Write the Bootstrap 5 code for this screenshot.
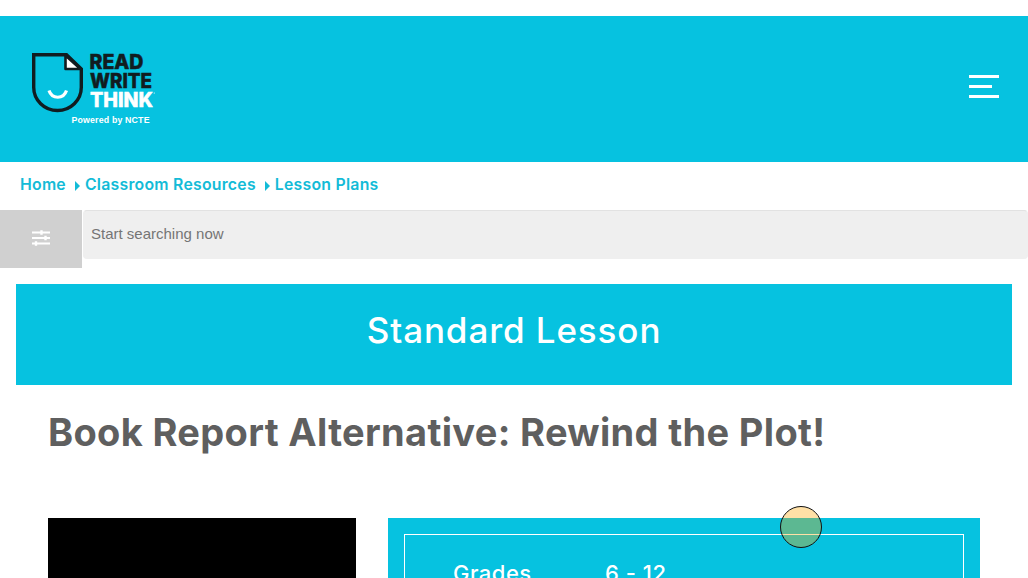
<!DOCTYPE html>
<html lang="en">
<head>
  <meta charset="UTF-8">
  <meta name="viewport" content="width=device-width, initial-scale=1">
  <title>Book Report Alternative: Rewind the Plot! | Read Write Think</title>
  <!-- Bootstrap CSS -->
  <link href="https://cdn.jsdelivr.net/npm/bootstrap@5.3.3/dist/css/bootstrap.min.css" rel="stylesheet">
  <style>
    :root {
      --rwt-blue: #06c2e0;
      --rwt-gray: #5f5f5f;
    }
    body {
      font-family: Inter, "Open Sans", sans-serif;
      height: 100vh;
      overflow: hidden;
    }
    .bg-rwt {
      background-color: var(--rwt-blue);
    }

    /* Header */
    .site-header {
      height: 146px;
      padding: 0 29px 5px 32px;
    }
    .site-logo {
      margin-top: 6px;
    }
    .menu-toggle {
      gap: 7px;
    }
    .menu-toggle span {
      display: block;
      width: 30px;
      height: 3px;
      background: #fff;
    }
    .menu-toggle span:nth-child(2) {
      width: 23px;
    }

    /* Breadcrumbs */
    .crumbs {
      height: 48px;
      padding: 0 20px 2px;
      font-size: 15.8px;
      font-weight: 600;
      letter-spacing: .25px;
    }
    .crumbs a {
      color: #13bbd7;
      white-space: nowrap;
    }
    .crumb-arrow {
      margin: 1px 5px 0 9px;
      border-left: 5px solid #13bbd7;
      border-top: 5px solid transparent;
      border-bottom: 5px solid transparent;
    }

    /* Search */
    .filter-btn {
      width: 82px;
      height: 58px;
      padding: 0 0 3px;
      background: #d0d0d0;
    }
    .search-input {
      height: 49px;
      margin-left: 1px;
      padding: 0 7px 3px;
      border: 1px solid #efefef;
      border-top-color: #e2e2e2;
      border-radius: 4px;
      background: #efefef;
      font: 15px "Liberation Sans", Arial, sans-serif;
    }
    .search-input::placeholder {
      color: #757575;
    }

    .type-banner {
      height: 101px;
      padding-bottom: 10px;
    }
    .type-banner h2 {
      font-size: 35px;
      font-weight: 500;
      letter-spacing: .9px;
    }
    .lesson-title {
      margin: 23px 0 0;
      height: 94px;
      line-height: 48px;
      font-size: 38px;
      font-weight: 700;
      letter-spacing: .33px;
      color: var(--rwt-gray);
      white-space: nowrap;
    }

    /* Preview image and details */
    .lesson-row {
      gap: 32px;
    }
    .lesson-thumb {
      width: 308px;
      height: 60px;
    }
    .lesson-details {
      height: 60px;
      padding: 16px 16px 0;
    }
    .details-box {
      border: 1px solid #fff;
      border-bottom: 0;
      padding: 22px 48px 0;
      font-size: 22px;
      font-weight: 500;
      letter-spacing: .5px;
    }
    .details-label {
      width: 152px;
    }

    /* Pointer highlight, floats over the page */
    .pointer-ring {
      left: 780px;
      top: 506px;
      width: 42px;
      height: 42px;
      border: 1px solid #111;
      background: rgba(255, 165, 0, .35);
    }
  </style>
</head>
<body class="bg-white">

<header class="site-header bg-rwt mt-3 d-flex align-items-center justify-content-between">
  <a href="#" class="site-logo" aria-label="Read Write Think">
    <svg class="d-block overflow-visible" width="126" height="76" viewBox="0 0 126 76">
      <!-- Page with folded corner and smile -->
      <path d="M1.700 2.700H34.500L49.300 17V35.200A23.800 23.300 0 0 1 1.700 35.200Z" fill="none" stroke="#111c20" stroke-width="3.400"/>
      <path d="M33.500 3.500V17H48.500Z" fill="#fff" stroke="#111c20" stroke-width="2.600" stroke-linejoin="round"/>
      <path d="M17 38.500C20 47.500 31.500 47.500 34.500 38.500" fill="none" stroke="#fff" stroke-width="3.200"/>
      <g font-family="Inter, sans-serif" font-weight="800" font-size="20" stroke-width=".5">
        <g fill="#111c20" stroke="#111c20">
          <text x="57.500" y="17" textLength="54" lengthAdjust="spacingAndGlyphs">READ</text>
          <text x="58" y="35.700" textLength="62" lengthAdjust="spacingAndGlyphs">WRITE</text>
        </g>
        <text x="58" y="54.700" fill="#fff" stroke="#fff" textLength="63" lengthAdjust="spacingAndGlyphs">THINK</text>
      </g>
      <circle cx="122.300" cy="41" r=".6" fill="#fff"/>
      <text x="39.500" y="70.700" fill="#fff" font-family="Liberation Sans, Arial, sans-serif" font-weight="700" font-size="8.800" textLength="78">Powered by NCTE</text>
    </svg>
  </a>
  <button type="button" class="menu-toggle btn p-0 border-0 rounded-0 d-flex flex-column" aria-label="Menu">
    <span></span><span></span><span></span>
  </button>
</header>

<nav class="crumbs d-flex align-items-center" aria-label="breadcrumb">
  <a href="#" class="text-decoration-none">Home</a>
  <span class="crumb-arrow"></span>
  <a href="#" class="text-decoration-none">Classroom Resources</a>
  <span class="crumb-arrow"></span>
  <a href="#" class="text-decoration-none">Lesson Plans</a>
</nav>

<form class="d-flex align-items-start">
  <button type="button" class="filter-btn btn border-0 rounded-0 d-flex align-items-center justify-content-center flex-shrink-0" aria-label="Filters">
    <svg width="18" height="16" viewBox="0 0 18 16" stroke="#fff" fill="none">
      <path d="M0 2.500H18M0 8H18M0 13.500H18" stroke-width="2.200"/>
      <path d="M9.500 .3V4.700M13.500 5.800V10.200M4 11.300V15.700" stroke-width="2.400"/>
    </svg>
  </button>
  <input type="text" class="search-input flex-grow-1" placeholder="Start searching now">
</form>

<main class="px-3 pt-3">
  <div class="type-banner bg-rwt text-white d-flex align-items-center justify-content-center">
    <h2 class="m-0">Standard Lesson</h2>
  </div>
  <div class="px-4 mx-2">
    <h1 class="lesson-title">Book Report Alternative: Rewind the Plot!</h1>
    <div class="lesson-row d-flex pt-3">
      <div class="lesson-thumb bg-black flex-shrink-0"></div>
      <div class="lesson-details bg-rwt flex-grow-1">
        <div class="details-box h-100 text-white d-flex">
          <div class="details-label">Grades</div>
          <div>6 - 12</div>
        </div>
      </div>
    </div>
  </div>
</main>

<div class="pointer-ring position-absolute rounded-circle"></div>

<script src="https://cdn.jsdelivr.net/npm/bootstrap@5.3.3/dist/js/bootstrap.bundle.min.js"></script>
</body>
</html>
